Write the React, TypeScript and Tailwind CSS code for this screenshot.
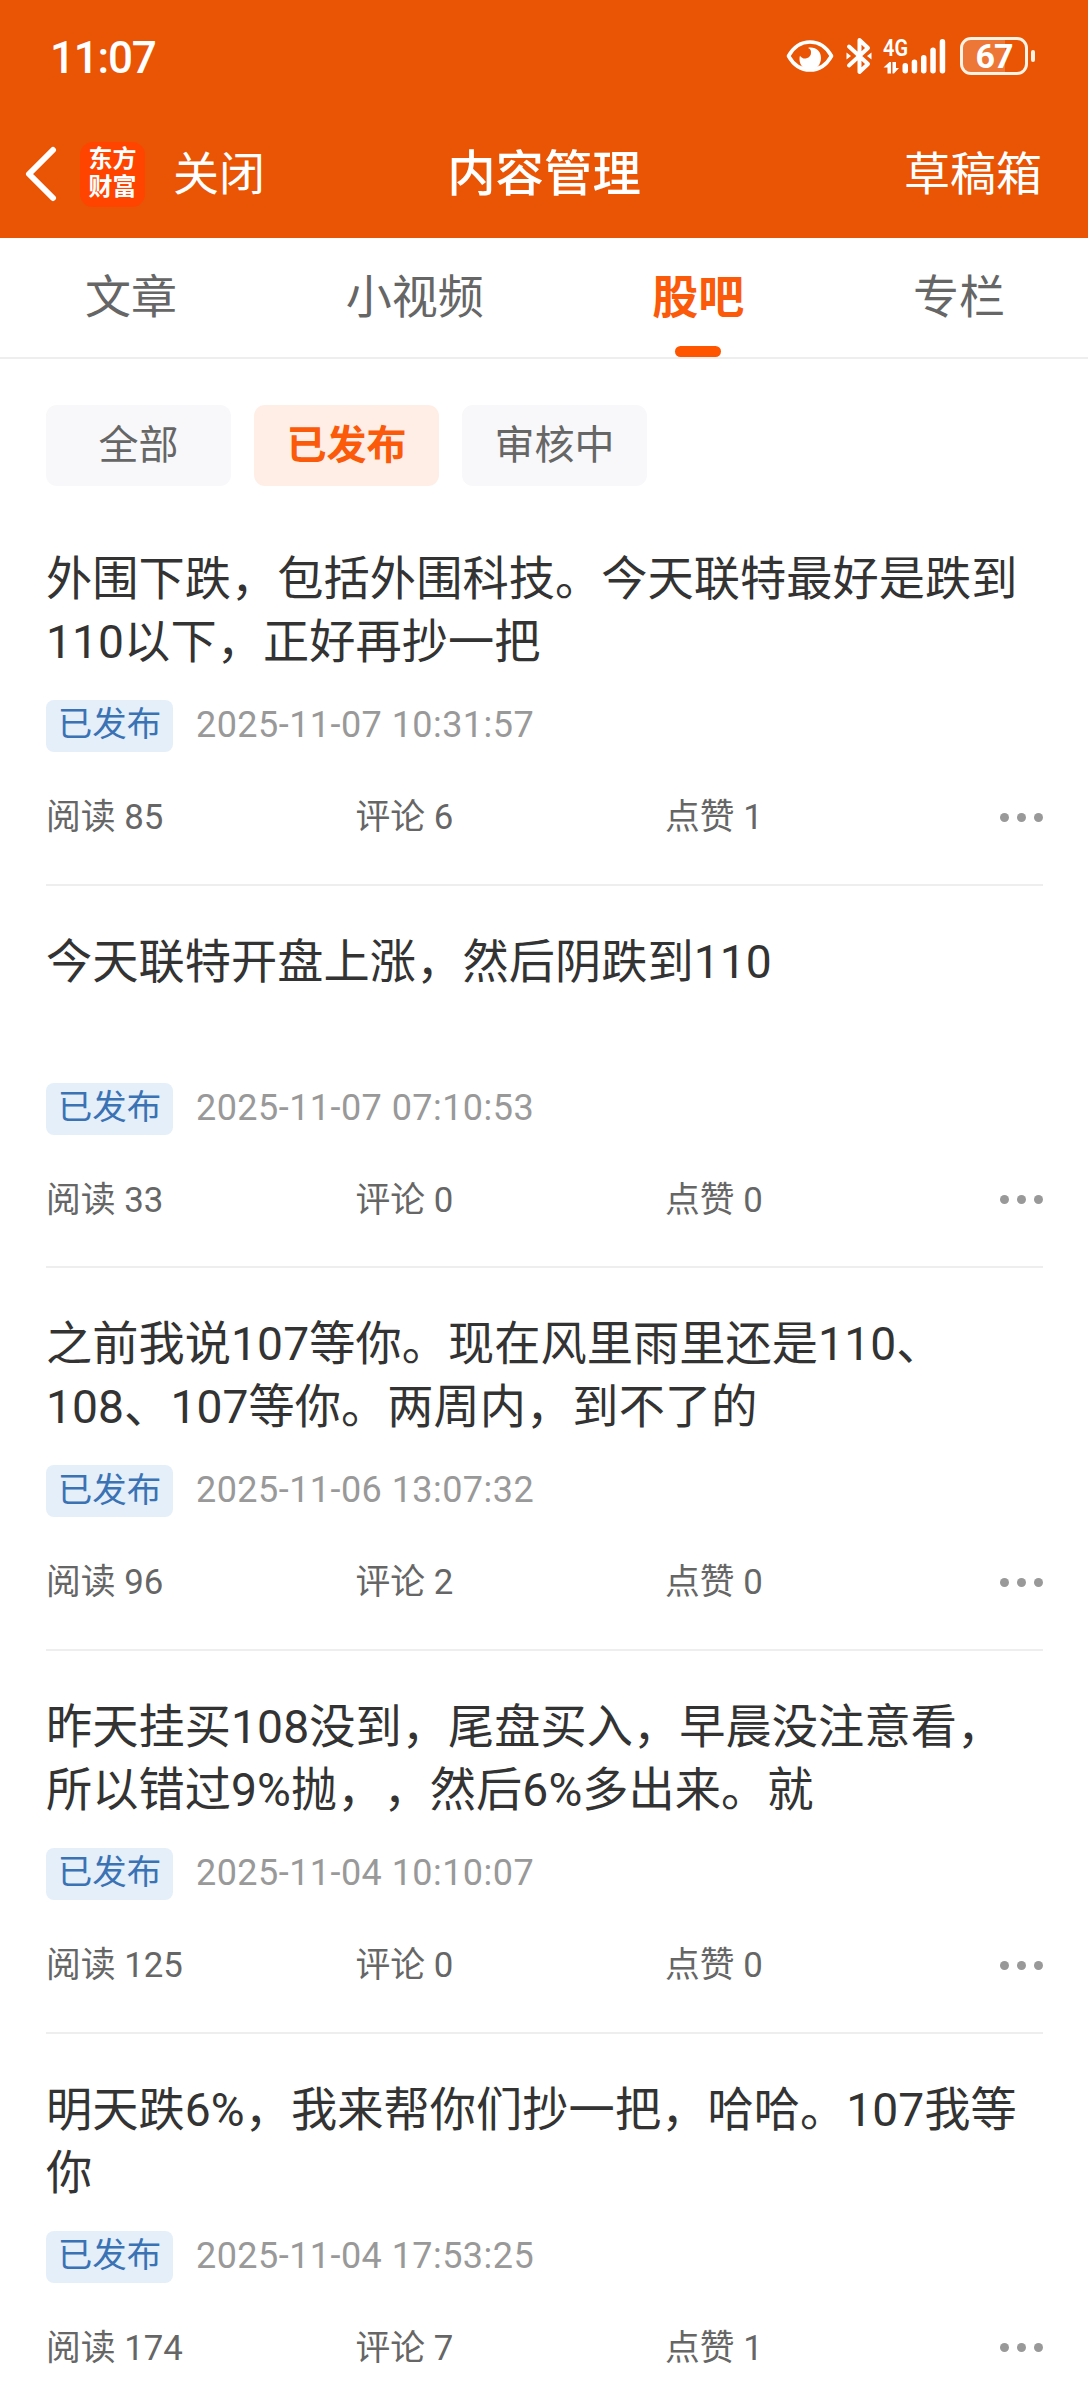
interface Post {
  title: string;
  date: string;
  reads: number;
  comments: number;
  likes: number;
}

const tabs = ['文章', '小视频', '股吧', '专栏'];
const filters = ['全部', '已发布', '审核中'];

const posts: Post[] = [
  {
    title: '外围下跌，包括外围科技。今天联特最好是跌到\n110以下，正好再抄一把',
    date: '2025-11-07 10:31:57',
    reads: 85,
    comments: 6,
    likes: 1,
  },
  {
    title: '今天联特开盘上涨，然后阴跌到110',
    date: '2025-11-07 07:10:53',
    reads: 33,
    comments: 0,
    likes: 0,
  },
  {
    title: '之前我说107等你。现在风里雨里还是110、\n108、107等你。两周内，到不了的',
    date: '2025-11-06 13:07:32',
    reads: 96,
    comments: 2,
    likes: 0,
  },
  {
    title: '昨天挂买108没到，尾盘买入，早晨没注意看，\n所以错过9%抛，，然后6%多出来。就',
    date: '2025-11-04 10:10:07',
    reads: 125,
    comments: 0,
    likes: 0,
  },
  {
    title: '明天跌6%，我来帮你们抄一把，哈哈。107我等\n你',
    date: '2025-11-04 17:53:25',
    reads: 174,
    comments: 7,
    likes: 1,
  },
];

function EyeIcon() {
  return (
    <svg width="48" height="34" viewBox="0 0 48 34" fill="none">
      <path
        d="M2.500 17C7 9 14.500 3 24 3s17 6 21.500 14C41 25 33.500 31 24 31S7 25 2.500 17Z"
        stroke="currentColor"
        strokeWidth="3.600"
        strokeLinejoin="round"
      />
      <path
        d="M24.500 8.500C31 8.500 35 13 35 19c0 6.500-4.500 12-11 12s-10.500-5-10.500-11c0-1.200.1-2.300.5-3.300 1.500 2.300 4 3.300 6.500 2.600 3-.8 4.800-3.300 4.500-6.300-.1-1.800-.5-3-3-4.100.8-.3 1.600-.4 2.500-.4Z"
        fill="currentColor"
      />
    </svg>
  );
}

function BluetoothIcon() {
  return (
    <svg width="26" height="38" viewBox="0 0 26 38" fill="none">
      <path
        d="M3 9.500 22 27l-8.500 8V3L22 11 3 28.500"
        stroke="currentColor"
        strokeWidth="4"
        strokeLinecap="round"
        strokeLinejoin="round"
      />
      <path d="M.5 15.500 5 19 .5 22.500ZM25.500 15.500 21 19l4.500 3.500Z" fill="currentColor" />
    </svg>
  );
}

function SignalIcon() {
  return (
    <svg width="64" height="50" viewBox="0 -6 64 50" fill="currentColor">
      <text x="0" y="18.500" fontSize="23" fontWeight="600" textLength="25" lengthAdjust="spacingAndGlyphs">
        4G
      </text>
      <path d="M4.500 25v11.500H8V25H6.500L.5 30.500h4ZM9.500 25H13v6h3l-5 5.500H9.500Z" />
      <rect x="19.500" y="26" width="5.500" height="10.500" rx="2.700" />
      <rect x="28.700" y="22.500" width="5.500" height="14" rx="2.700" />
      <rect x="38" y="18" width="5.500" height="18.500" rx="2.700" />
      <rect x="47.300" y="10.500" width="5.500" height="26" rx="2.700" />
      <rect x="56.700" y="2" width="5.500" height="34.500" rx="2.700" />
    </svg>
  );
}

function Battery({ level }: { level: number }) {
  return (
    <div className="flex items-center gap-[3px]">
      <div className="relative flex h-[38px] w-[68px] items-center justify-center overflow-hidden rounded-[11px] border-3 border-[#fff3e6]">
        <div className="absolute inset-y-0 left-0 bg-white/20" style={{ width: `${level}%` }} />
        <span className="relative text-[34px] leading-none font-bold tracking-[-1px]">{level}</span>
      </div>
      <div className="h-[12px] w-[4px] rounded-full bg-[#fff3e6]" />
    </div>
  );
}

function StatusBar() {
  return (
    <div className="flex h-[112px] items-center justify-between pr-[53px] pl-[50px]">
      <span className="mt-[3px] text-[44px] leading-none font-medium tracking-[-1.200px]">11:07</span>
      <div className="flex items-center">
        <EyeIcon />
        <div className="ml-[12px]">
          <BluetoothIcon />
        </div>
        <div className="ml-[11px]">
          <SignalIcon />
        </div>
        <div className="ml-[13px]">
          <Battery level={67} />
        </div>
      </div>
    </div>
  );
}

function NavBar() {
  return (
    <div className="relative flex h-[126px] items-center justify-between pr-[46px] pb-[2px] pl-[25px]">
      <div className="flex items-center">
        <svg width="32" height="56" viewBox="0 0 32 56" fill="none">
          <path
            d="M28 4 4 28l24 24"
            stroke="currentColor"
            strokeWidth="6"
            strokeLinecap="round"
            strokeLinejoin="round"
          />
        </svg>
        <div className="ml-[23px] flex h-[65px] w-[65px] flex-col items-center justify-center rounded-[13px] bg-[#ff4400] pb-[2px] text-[24px] leading-[28px] font-bold">
          <span>东方</span>
          <span>财富</span>
        </div>
        <span className="mt-[1px] ml-[28px] text-[46px]">关闭</span>
      </div>
      <h1 className="absolute inset-x-0 pt-[2px] text-center text-[48.400px] font-medium">内容管理</h1>
      <span className="text-[46px]">草稿箱</span>
    </div>
  );
}

function PostItem({ post }: { post: Post }) {
  return (
    <article className="h-[382.700px] shrink-0 border-b-2 border-[#eeeeee] pt-[45px]">
      <h2 className="h-[127px] text-[46.200px] leading-[63px] tracking-[0.080px] whitespace-pre text-[#333333] [text-spacing-trim:space-all]">
        {post.title}
      </h2>
      <div className="mt-[25px] flex items-center">
        <span className="flex h-[52px] w-[127px] items-center justify-center rounded-[8px] bg-[#e4effa] pb-[2px] text-[34.500px] text-[#3a72b4]">
          已发布
        </span>
        <span className="ml-[23px] pb-[1px] text-[36px] leading-[51px] tracking-[0.450px] text-[#999999]">
          {post.date}
        </span>
      </div>
      <div className="mt-[40px] flex h-[50px] items-center text-[34.800px] text-[#666666]">
        <span className="w-[309.500px]">阅读 {post.reads}</span>
        <span className="w-[309.500px]">评论 {post.comments}</span>
        <span>点赞 {post.likes}</span>
        <div className="ml-auto flex gap-[8px]">
          <i className="size-[9px] rounded-full bg-[#999999]" />
          <i className="size-[9px] rounded-full bg-[#999999]" />
          <i className="size-[9px] rounded-full bg-[#999999]" />
        </div>
      </div>
    </article>
  );
}

export default function App() {
  return (
    <div className="flex h-[2400px] w-[1088px] flex-col overflow-hidden bg-white font-[Roboto,'Noto_Sans_CJK_SC',sans-serif]">
      <header className="h-[238px] shrink-0 bg-[#e95504] text-white">
        <StatusBar />
        <NavBar />
      </header>

      <nav className="flex h-[121px] shrink-0 justify-between border-b-2 border-[#eeeeee] pr-[83px] pl-[85px]">
        {tabs.map((tab) => (
          <div
            key={tab}
            className={
              tab === '股吧'
                ? 'flex flex-col items-center justify-between text-[46px] font-bold text-[#fa5a0a]'
                : 'flex flex-col items-center text-[46px] text-[#666666]'
            }
          >
            <span className="mt-[25px] leading-[69px]">{tab}</span>
            {tab === '股吧' && <span className="h-[11px] w-[46px] rounded-full bg-[#ff5500]" />}
          </div>
        ))}
      </nav>

      <div className="mt-[46px] flex shrink-0 gap-[23px] px-[46px]">
        {filters.map((filter) => (
          <button
            key={filter}
            className={
              filter === '已发布'
                ? 'h-[81px] w-[185px] rounded-[11px] bg-[#ffeee6] text-[40px] font-bold text-[#fa5a0a]'
                : 'h-[81px] w-[185px] rounded-[11px] bg-[#f8f8fa] text-[40px] text-[#666666]'
            }
          >
            {filter}
          </button>
        ))}
      </div>

      <main className="mt-[17px] flex flex-col pr-[45px] pl-[46px]">
        {posts.map((post) => (
          <PostItem key={post.date} post={post} />
        ))}
      </main>
    </div>
  );
}
